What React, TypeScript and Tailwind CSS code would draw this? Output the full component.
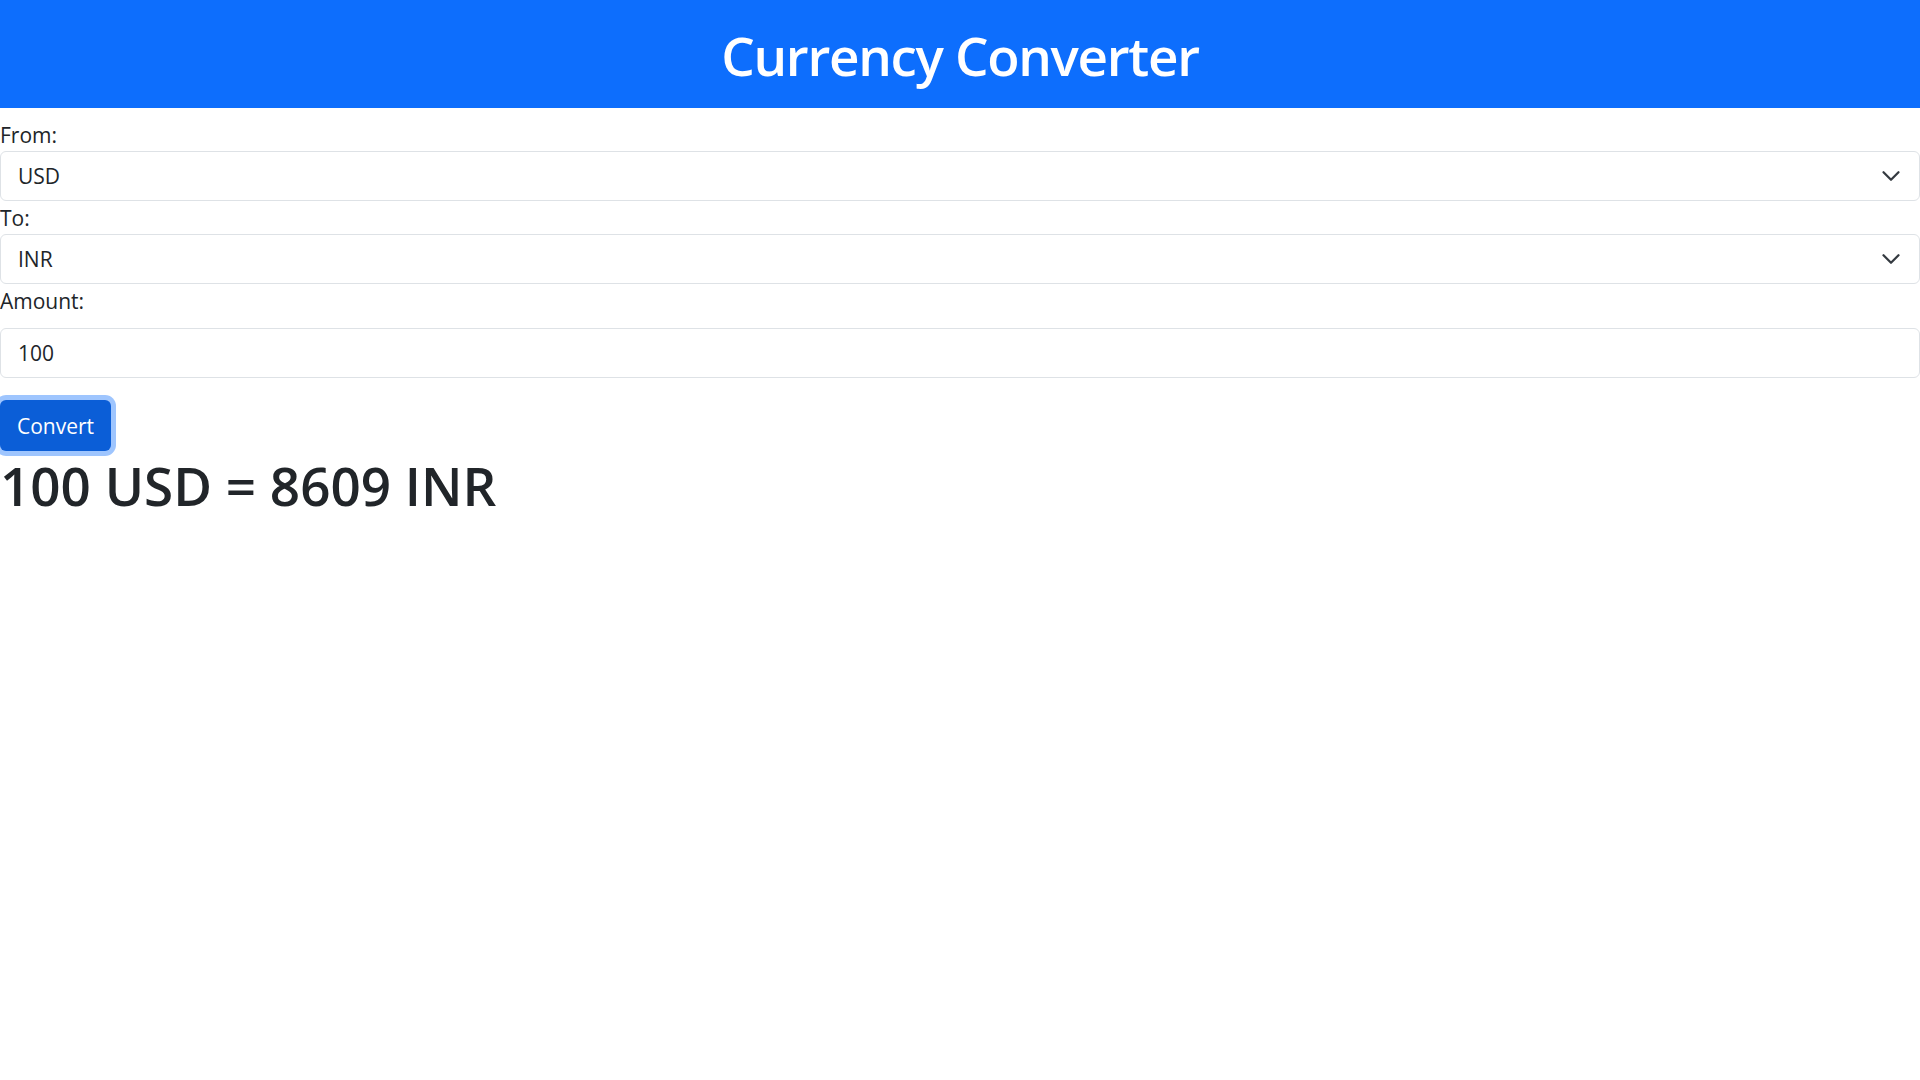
import { useState } from "react";

const currencies = ["USD", "INR", "EUR", "GBP", "JPY"];

function Chevron() {
  return (
    <svg
      aria-hidden
      viewBox="0 0 16 16"
      className="pointer-events-none absolute right-[19px] top-1/2 -translate-y-1/2 w-[20px] h-[20px]"
      fill="none"
      stroke="#343a40"
      strokeWidth="1.8"
      strokeLinecap="round"
      strokeLinejoin="round"
    >
      <path d="m2 5 6 6 6-6" />
    </svg>
  );
}

function CurrencySelect({ value, onChange }: { value: string; onChange: (v: string) => void }) {
  return (
    <div className="relative">
      <select
        value={value}
        onChange={(e) => onChange(e.target.value)}
        className="block w-full h-[50px] appearance-none rounded-[6px] border border-[#dee2e6] bg-white pl-[17px] pr-[60px] text-[21px] leading-[33px] text-[#212529] outline-none"
      >
        {currencies.map((c) => (
          <option key={c} value={c}>
            {c}
          </option>
        ))}
      </select>
      <Chevron />
    </div>
  );
}

export default function App() {
  const [from, setFrom] = useState("USD");
  const [to, setTo] = useState("INR");
  const [amount, setAmount] = useState("100");
  const [result] = useState("100 USD = 8609 INR");

  return (
    <div className="min-h-screen bg-white text-[#212529] font-['Open_Sans',sans-serif]">
      <header className="bg-[#0d6efd] h-[108px] flex items-center justify-center">
        <h1 className="text-white text-[53px] font-semibold leading-[1.2] tracking-[-0.025em] pt-[3px]">
          Currency Converter
        </h1>
      </header>

      <div className="pt-[10px]">
        <label className="block text-[21px] pt-[2px] leading-[31px]">From:</label>
        <CurrencySelect value={from} onChange={setFrom} />

        <label className="block text-[21px] pt-[2px] leading-[31px]">To:</label>
        <CurrencySelect value={to} onChange={setTo} />

        <label className="block text-[21px] pt-[2px] leading-[31px] mb-[11px]">Amount:</label>
        <input
          type="number"
          value={amount}
          onChange={(e) => setAmount(e.target.value)}
          className="block w-full h-[50px] rounded-[6px] border border-[#dee2e6] bg-white px-[17px] text-[21px] leading-[33px] text-[#212529] outline-none [appearance:textfield] [&::-webkit-inner-spin-button]:appearance-none"
        />

        <button className="mt-[22px] h-[51px] px-[17px] pt-[1px] rounded-[6px] bg-[#0b5ed7] text-white text-[21px] leading-[33px] shadow-[0_0_0_5px_#9ec5fe]">
          Convert
        </button>

        <h1 className="text-[53px] font-semibold leading-[1.2] text-[#212529] pt-[3px]">{result}</h1>
      </div>
    </div>
  );
}
